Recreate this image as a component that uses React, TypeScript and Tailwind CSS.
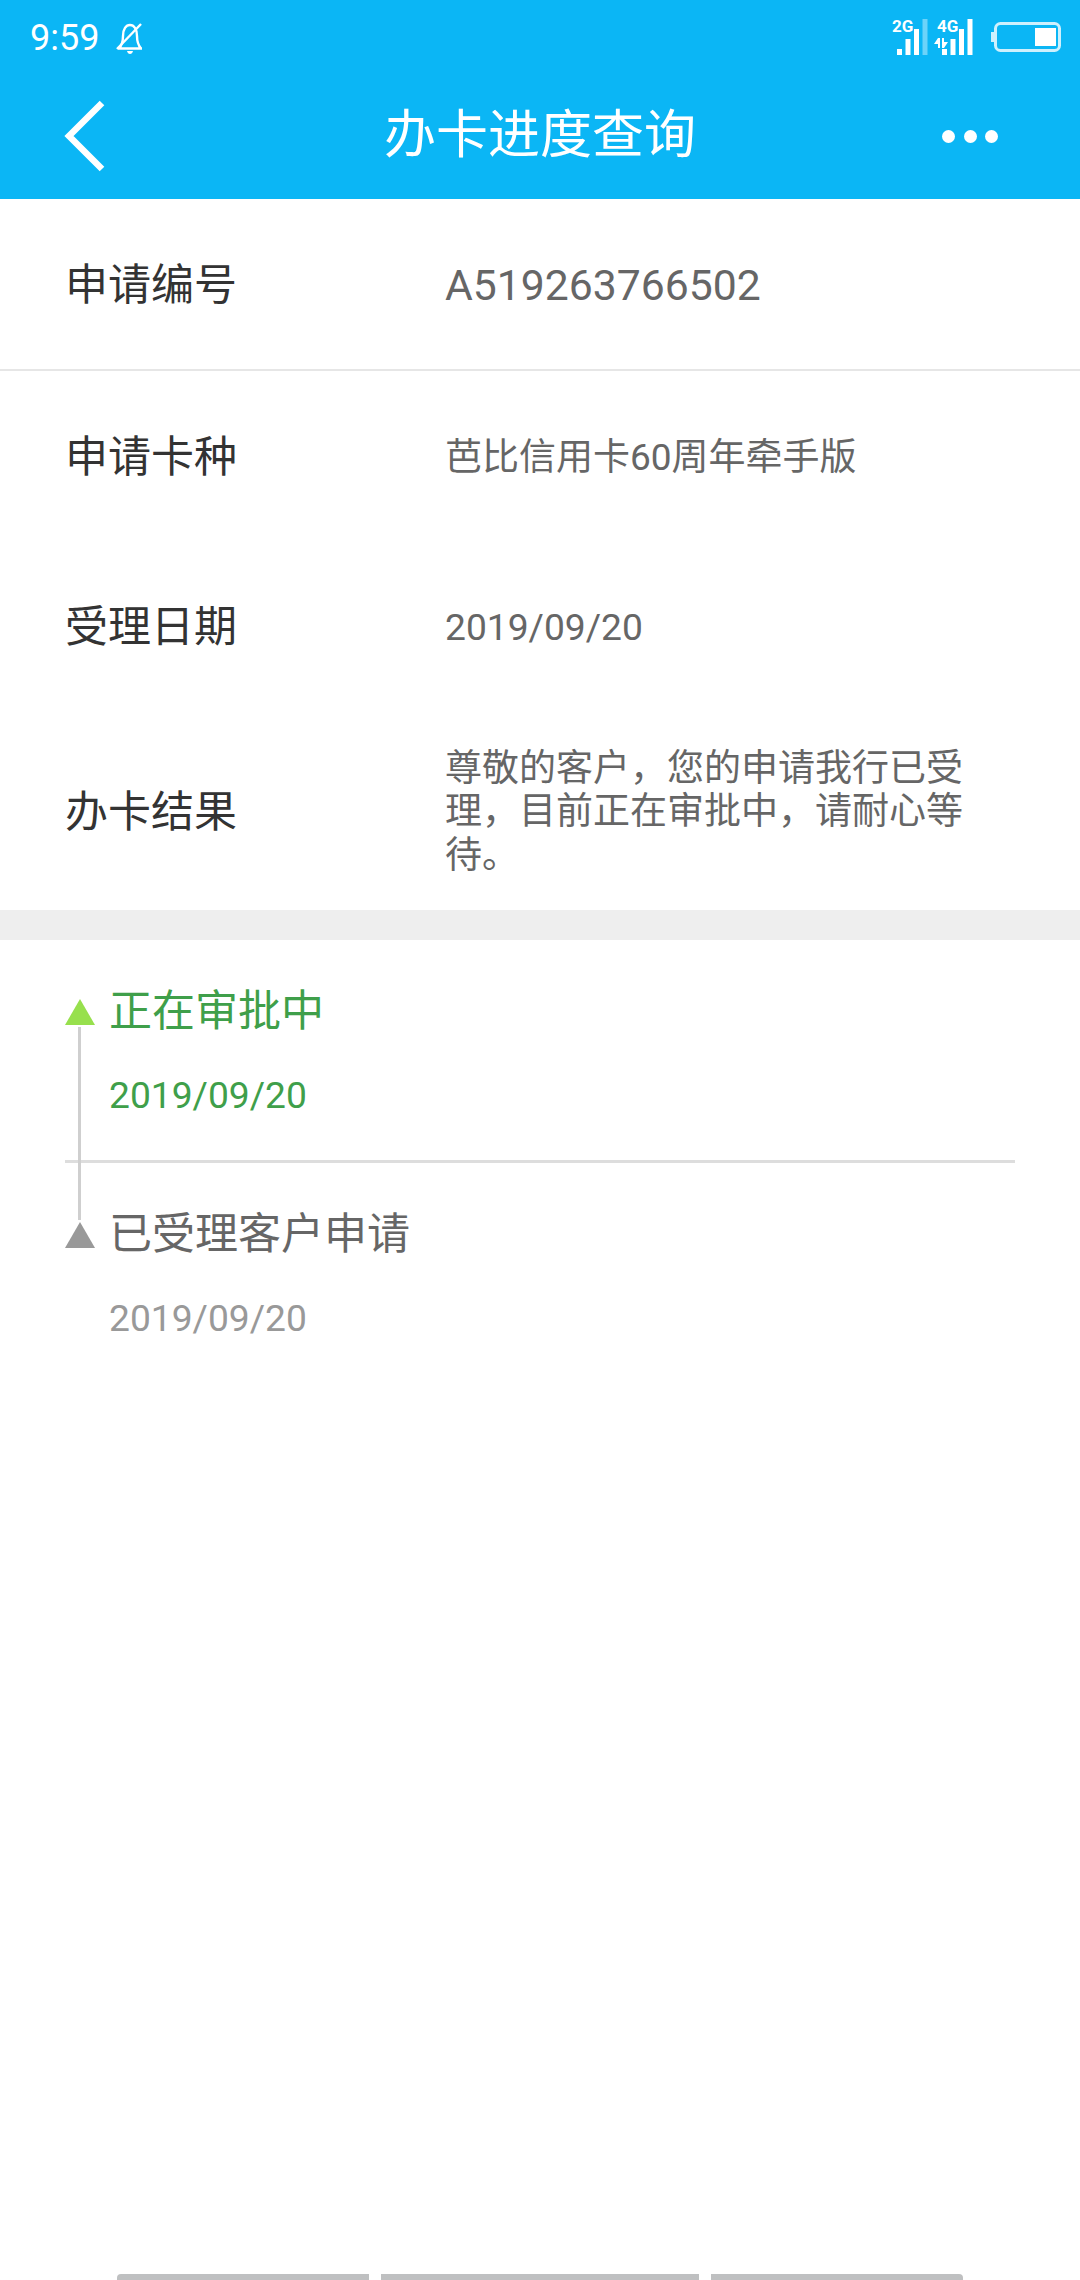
const sans = "font-['Roboto','Noto_Sans_CJK_SC',sans-serif]";

function Signal({ label, faded, arrows }: { label: string; faded?: boolean; arrows?: boolean }) {
  return (
    <svg width="40" height="36" viewBox="0 0 40 36" className="block overflow-visible">
      <text x="0" y="13" fontSize="17" fontWeight="700" fontFamily="Roboto" fill="#fff">{label}</text>
      <rect x="5" y="30" width="5" height="6" fill="#fff" />
      <rect x="13.5" y="20" width="5" height="16" fill="#fff" />
      <rect x="22" y="10" width="5" height="26" fill="#fff" />
      <rect x="30.5" y="0" width="5" height="36" fill="#fff" opacity={faded ? 0.4 : 1} />
      {arrows && <path d="M1 19h2v10H1v-4h-4zM5 19h2v4h4l-4 6H5z" fill="#fff" />}
    </svg>
  );
}

function Row({ label, children, className }: { label: string; children: React.ReactNode; className?: string }) {
  return (
    <div className={`flex items-center pl-[65px] pr-[110px] ${className ?? ""}`}>
      <div className="w-[380px] shrink-0 text-[43px] leading-none text-[#333333]">{label}</div>
      <div className="flex-1 text-[#666666]">{children}</div>
    </div>
  );
}

function Step({ title, date, color, dateColor, triangle, className }: { title: string; date: string; color: string; dateColor: string; triangle: string; className?: string }) {
  return (
    <div className={`flex flex-col pl-[65px] ${className ?? ""}`}>
      <div className="flex items-center gap-[14px] pt-[42px]">
        <svg width="30" height="27" viewBox="0 0 30 27" className="mt-[2px] block shrink-0">
          <polygon points="15,0 30,26 0,26" fill={triangle} />
        </svg>
        <span className={`text-[43px] leading-[58px] ${color}`}>{title}</span>
      </div>
      <div className={`pl-[44px] pt-[31px] text-[37.2px] leading-[48px] ${dateColor}`}>{date}</div>
    </div>
  );
}

export default function App() {
  return (
    <div className={`relative h-[2280px] w-[1080px] overflow-hidden bg-white ${sans}`}>
      <header className="h-[199px] bg-[#0bb6f5] text-white">
        <div className="flex h-[76px] items-start justify-between pr-[17px] pl-[30px]">
          <div className="flex items-center gap-[17px] pt-[18px]">
            <span className="text-[36px] leading-[41px]">9:59</span>
            <svg width="28" height="32" viewBox="0 0 28 32" fill="none" stroke="#fff" strokeWidth="2.4" className="block">
              <path d="M2 25.5h24M3 25.5C6 22 7 19 7 13 7 6 10 2 14 2s7 4 7 11c0 6 1 9 4 12.5" />
              <path d="M11 28h6c-.5 2-1.5 3-3 3s-2.5-1-3-3z" fill="#fff" stroke="none" />
              <path d="M1 26L25 1" />
            </svg>
          </div>
          <div className="flex items-start gap-[5px] pt-[19px]">
            <Signal label="2G" faded />
            <Signal label="4G" arrows />
            <svg width="72" height="32" viewBox="0 0 72 32" className="ml-[9px] mt-[2px] block">
              <rect x="0" y="11" width="3" height="10" fill="#fff" opacity="0.8" />
              <rect x="4.5" y="2.5" width="64" height="27" rx="5" fill="none" stroke="#fff" strokeOpacity="0.8" strokeWidth="3" />
              <rect x="44" y="7" width="21" height="18" fill="#fff" />
            </svg>
          </div>
        </div>
        <div className="grid h-[123px] grid-cols-[1fr_auto_1fr] items-center px-[64px] pb-[3px]">
          <svg width="42" height="72" viewBox="0 0 42 72" fill="none" stroke="#fff" strokeWidth="6.5" className="block">
            <path d="M38 3L5 36l33 33" />
          </svg>
          <h1 className="text-[52px] font-normal leading-none">办卡进度查询</h1>
          <div className="mr-[18px] flex items-center justify-end gap-[8.5px]">
            <span className="h-[13px] w-[13px] rounded-full bg-white" />
            <span className="h-[13px] w-[13px] rounded-full bg-white" />
            <span className="h-[13px] w-[13px] rounded-full bg-white" />
          </div>
        </div>
      </header>
      <section className="flex flex-col">
        <Row label="申请编号" className="h-[172px] border-b-[2px] border-[#e6e6e6] pt-[3px]">
          <span className="text-[42.7px] leading-none">A519263766502</span>
        </Row>
        <Row label="申请卡种" className="h-[170px] pt-[3px]">
          <span className="text-[37px] leading-none">芭比信用卡60周年牵手版</span>
        </Row>
        <Row label="受理日期" className="h-[170px] pt-[3px]">
          <span className="text-[37.2px] leading-none">2019/09/20</span>
        </Row>
        <Row label="办卡结果" className="h-[199px] pt-[3px]">
          <p className="text-[37px] leading-[43.5px]">尊敬的客户，您的申请我行已受理，目前正在审批中，请耐心等待。</p>
        </Row>
      </section>
      <div className="h-[30px] bg-[#eeeeee]" />
      <section className="relative">
        <div className="absolute left-[78px] top-[87px] h-[193px] w-[3px] bg-[#cfcfcf]" />
        <Step title="正在审批中" date="2019/09/20" color="text-[#3f9f4a]" dateColor="text-[#3f9f4a]" triangle="#97e04d" className="h-[220px]" />
        <div className="mx-[65px] h-[3px] bg-[#dddddd]" />
        <Step title="已受理客户申请" date="2019/09/20" color="text-[#666666]" dateColor="text-[#999999]" triangle="#999999" className="h-[220px]" />
      </section>
      <div className="absolute bottom-0 left-[117px] flex h-[6px] gap-[12px]">
        <div className="w-[252px] rounded-tl-[4px] bg-[#bfc0c1]" />
        <div className="w-[318px] bg-[#bfc0c1]" />
        <div className="w-[252px] rounded-tr-[4px] bg-[#bfc0c1]" />
      </div>
    </div>
  );
}
